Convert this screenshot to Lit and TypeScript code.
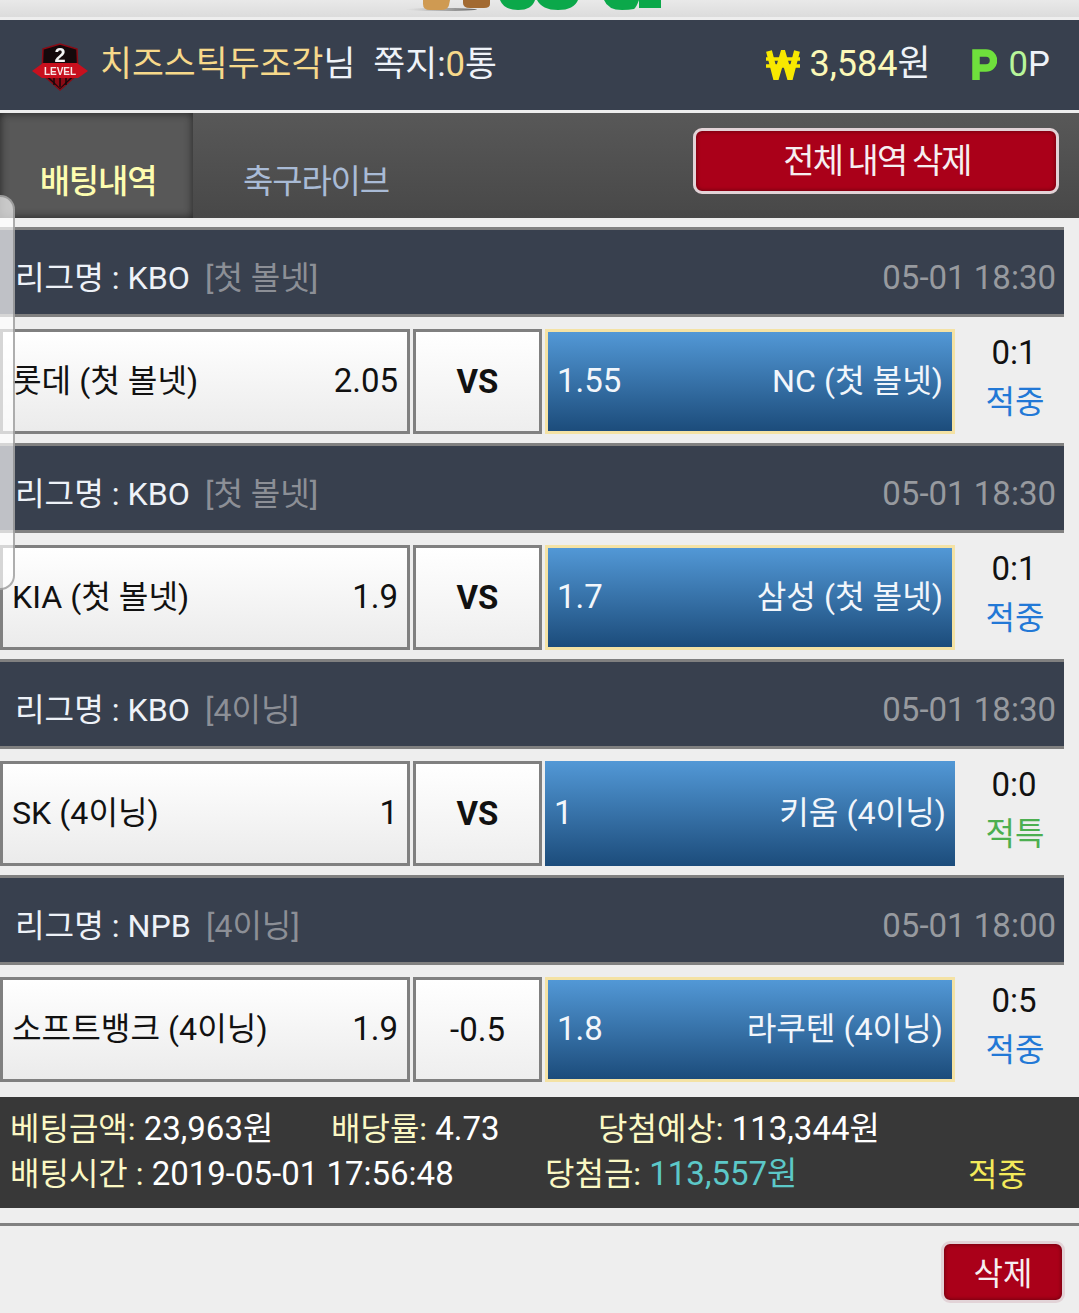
import { LitElement, html, css } from "lit";
import { customElement } from "lit/decorators.js";

interface Game {
  league: string; tag: string; time: string;
  home: string; homeOdd: string; mid: string; midBold: boolean;
  awayOdd: string; away: string; score: string; result: string;
  green?: boolean; plain?: boolean;
}

const games: Game[] = [
  { league: "리그명 : KBO", tag: "[첫 볼넷]", time: "05-01 18:30", home: "롯데 (첫 볼넷)", homeOdd: "2.05", mid: "VS", midBold: true, awayOdd: "1.55", away: "NC (첫 볼넷)", score: "0:1", result: "적중" },
  { league: "리그명 : KBO", tag: "[첫 볼넷]", time: "05-01 18:30", home: "KIA (첫 볼넷)", homeOdd: "1.9", mid: "VS", midBold: true, awayOdd: "1.7", away: "삼성 (첫 볼넷)", score: "0:1", result: "적중" },
  { league: "리그명 : KBO", tag: "[4이닝]", time: "05-01 18:30", home: "SK (4이닝)", homeOdd: "1", mid: "VS", midBold: true, awayOdd: "1", away: "키움 (4이닝)", score: "0:0", result: "적특", green: true, plain: true },
  { league: "리그명 : NPB", tag: "[4이닝]", time: "05-01 18:00", home: "소프트뱅크 (4이닝)", homeOdd: "1.9", mid: "-0.5", midBold: false, awayOdd: "1.8", away: "라쿠텐 (4이닝)", score: "0:5", result: "적중" },
];

@customElement("app-root")
export class AppRoot extends LitElement {
  static styles = css`
    :host {
      display: block; position: relative; width: 1079px; height: 1313px; overflow: hidden;
      background: #eeeeee;
      font-family: Roboto, "Noto Sans CJK KR", sans-serif;
      font-size: 32px; color: #111;
    }
    .top { height: 17px; background: linear-gradient(#e9e9e9, #dcdcdc); position: relative; overflow: hidden; }
    .logo { position: absolute; left: 395px; top: 0; width: 280px; height: 17px; display: block; }
    .user {
      margin-top: 3px; height: 90px; background: #38404e; display: flex; align-items: center;
      justify-content: space-between; padding: 0 29px 2px 30px; box-sizing: border-box;
      color: #eef2f8; line-height: 46px; font-size: 34.7px;
    }
    .side { display: flex; align-items: center; }
    .badge { width: 60px; height: 60px; margin: 0 10px 4px 0; display: block; }
    .soft { filter: blur(0.6px); }
    .gold { color: #f7d98a; }
    .msg { margin-left: 18px; }
    .won { width: 34px; height: 30px; margin: 2px 9px 0 0; display: block; }
    .money { font-size: 36px; }
    .cream { color: #fbf8b8; }
    .pt { width: 26px; height: 32px; margin: 0 12px 0 40px; display: block; }
    .lime { color: #b8f59a; }
    .tabs {
      margin-top: 3px; height: 105px; display: flex; position: relative;
      background: linear-gradient(#585858, #484848);
    }
    .tab {
      width: 193px; box-sizing: border-box; display: flex; justify-content: center;
      align-items: flex-end; padding-bottom: 13px; font-size: 33px; line-height: 46px; letter-spacing: -1.2px;
    }
    .tab.on { background: #585858; color: #fdfdb0; font-weight: 500; box-shadow: inset 0 0 8px #222; padding-left: 3px; }
    .tab.off { color: #a9bbd6; width: 246px; }
    .btn {
      background: #aa0019; color: #f6eef0; border: 3px solid #e2d3d7; box-sizing: border-box;
      box-shadow: inset 0 0 4px #5c000c; display: flex; align-items: center; justify-content: center;
      font-family: inherit;
    }
    .all {
      position: absolute; left: 693px; top: 15px; width: 366px; height: 66px; border-radius: 9px;
      font-size: 34px; letter-spacing: -1.9px; word-spacing: -1px; padding: 0 0 5px 2px;
    }
    .list { padding-top: 9px; }
    .head {
      width: 1064px; height: 90px; box-sizing: border-box; background: #38404e;
      border-top: 3px solid #808080; border-bottom: 3px solid #808080;
      display: flex; justify-content: space-between; align-items: flex-end;
      padding: 0 8px 13px 15px; color: #eef2f8; line-height: 46px; font-size: 32.2px;
    }
    .tag { color: #8c8f96; margin-left: 15px; font-size: 32px; }
    .time { color: #979a9f; font-size: 33px; }
    .row { display: flex; margin: 12px 0 9px; height: 105px; }
    .cell {
      box-sizing: border-box; height: 105px; border: 3px solid #808080; display: flex;
      align-items: center; justify-content: space-between; line-height: 46px;
      background: linear-gradient(#ffffff, #ebebeb);
    }
    .num { font-size: 33px; }
    .name { font-size: 32.2px; }
    .homec { width: 410px; padding: 0 9px 1px 9px; }
    .midc { width: 129px; margin-left: 3px; justify-content: center; background: linear-gradient(#fff, #eee); font-size: 33px; padding-bottom: 0; }
    .midc b { font-weight: 700; }
    .awayc {
      width: 410px; margin-left: 3px; padding: 0 9px 1px 9px; color: #f2f6fb; border-color: #f4e2a4;
      background: linear-gradient(#5298d6, #1c4c7b);
    }
    .awayc.plain { border-color: transparent; background: linear-gradient(#5298d6, #1c4c7b) border-box; padding: 0 6px 1px 6px; }
    .res {
      width: 120px; display: flex; flex-direction: column; align-items: center;
      line-height: 48px; padding-right: 2px; box-sizing: border-box;
    }
    .score { font-size: 33px; }
    .hit { color: #2278d6; line-height: 50px; margin-left: 2px; }
    .hit.g { color: #4caf50; }
    .sum {
      margin-top: 15px; height: 111px; background: #383838; color: #fff; box-sizing: border-box;
      padding: 9px 10px 0; line-height: 45px; font-size: 33px;
    }
    .sumrow { display: grid; }
    .r1 { grid-template-columns: 321px 267px auto; }
    .r2 { grid-template-columns: 535px 423px auto; margin-top: -1px; }
    .k { color: #fbf8c4; font-size: 32px; }
    .teal { color: #5cc8c8; }
    .yel { color: #f3ea5a; font-size: 32px; padding-top: 2px; }
    .line { height: 3px; background: #808080; margin-top: 15px; }
    .foot { display: flex; justify-content: flex-end; padding: 15px 14px 0 0; }
    .del { width: 124px; height: 62px; border-radius: 9px; font-size: 32px; padding-bottom: 3px; }
    .scroll {
      position: absolute; left: -14px; top: 195px; width: 29px; height: 395px; box-sizing: border-box;
      border: 2px solid rgba(130,130,130,.65); border-radius: 16px;
      background: rgba(255,255,255,.68);
    }
  `;

  private row(g: Game) {
    return html`
      <div class="head">
        <div>${g.league}<span class="tag">${g.tag}</span></div>
        <div class="time">${g.time}</div>
      </div>
      <div class="row">
        <div class="cell homec"><span class="name">${g.home}</span><span class="num">${g.homeOdd}</span></div>
        <div class="cell midc">${g.midBold ? html`<b>${g.mid}</b>` : g.mid}</div>
        <div class="cell awayc ${g.plain ? "plain" : ""}"><span class="num">${g.awayOdd}</span><span class="name">${g.away}</span></div>
        <div class="res"><span class="score">${g.score}</span><span class="hit ${g.green ? "g" : ""}">${g.result}</span></div>
      </div>`;
  }

  render() {
    return html`
      <div class="top">
        <svg class="logo" viewBox="0 0 280 17">
          <defs>
            <linearGradient id="sh" x1="0" x2="1"><stop offset="0" stop-color="#888" stop-opacity="0"/><stop offset="1" stop-color="#444" stop-opacity=".8"/></linearGradient>
          </defs>
          <ellipse cx="46" cy="9.500" rx="36" ry="1.5" fill="url(#sh)"/>
          <path class="soft" d="M28 0h27l-1 5q-1 5-8 5H35q-7 0-7-6z" fill="#cf9a52"/>
          <path class="soft" d="M68 0h27v4q0 4-6 4H75q-7 0-7-5z" fill="#a26a32"/>
          <path d="M105 0h35q-3 10-17 10T105 0z" fill="#0ba84a"/>
          <path d="M142 0h41q-4 10-20 10T142 0z" fill="#0ba84a"/>
          <path d="M209 0h35q-3 8-5 9-5 1-12 1-14 0-18-10z" fill="#0ba84a"/>
          <rect x="244" y="0" width="22" height="8" fill="#0ba84a"/>
        </svg>
      </div>
      <div class="user">
        <div class="side">
          <svg class="badge soft" viewBox="0 0 60 60">
            <path d="M13 17 L30 12 L47 17 L48 42 L30 58 L12 42Z" fill="#14090b" stroke="#8a0a14" stroke-width="1.500"/>
            <path d="M18 44 L30 56 L42 44Z" fill="#8a0a14"/>
            <path d="M24 44v9M30 44v11M36 44v9" stroke="#14090b" stroke-width="1.500"/>
            <path d="M2 39 L13 31 L47 31 L58 39 L48 46 L12 46Z" fill="#c8101e"/>
            <text x="30" y="30" text-anchor="middle" font-family="Liberation Sans" font-weight="700" font-size="20" fill="#f4f4f4">2</text>
            <text x="30" y="43" text-anchor="middle" font-family="Liberation Sans" font-weight="700" font-size="10" fill="#f8e8e8">LEVEL</text>
          </svg>
          <span><span class="gold">치즈스틱두조각</span>님</span>
          <span class="msg">쪽지:<span class="gold">0</span>통</span>
        </div>
        <div class="side">
          <svg class="won soft" viewBox="0 0 34 30">
            <path d="M0 9h34M0 16h34" stroke="#f8e800" stroke-width="3.500"/>
            <path d="M3 1l7 27 7-24 7 24 7-27" fill="none" stroke="#f8e800" stroke-width="6"/>
          </svg>
          <span class="money"><span class="cream">3,584</span>원</span>
          <svg class="pt soft" viewBox="0 0 26 32">
            <path d="M5 32V5h10a7.500 7.500 0 0 1 0 15H5" fill="none" stroke="#6fe03c" stroke-width="7.500"/>
          </svg>
          <span><span class="lime">0</span>P</span>
        </div>
      </div>
      <div class="tabs">
        <div class="tab on">배팅내역</div>
        <div class="tab off">축구라이브</div>
        <button class="btn all">전체 내역 삭제</button>
      </div>
      <div class="list">${games.map((g) => this.row(g))}</div>
      <div class="sum">
        <div class="sumrow r1">
          <span><span class="k">베팅금액:</span> 23,963원</span>
          <span><span class="k">배당률:</span> 4.73</span>
          <span><span class="k">당첨예상:</span> 113,344원</span>
        </div>
        <div class="sumrow r2">
          <span><span class="k">배팅시간 :</span> 2019-05-01 17:56:48</span>
          <span><span class="k">당첨금:</span> <span class="teal">113,557원</span></span>
          <span class="yel">적중</span>
        </div>
      </div>
      <div class="line"></div>
      <div class="foot"><button class="btn del">삭제</button></div>
      <div class="scroll"></div>
    `;
  }
}
